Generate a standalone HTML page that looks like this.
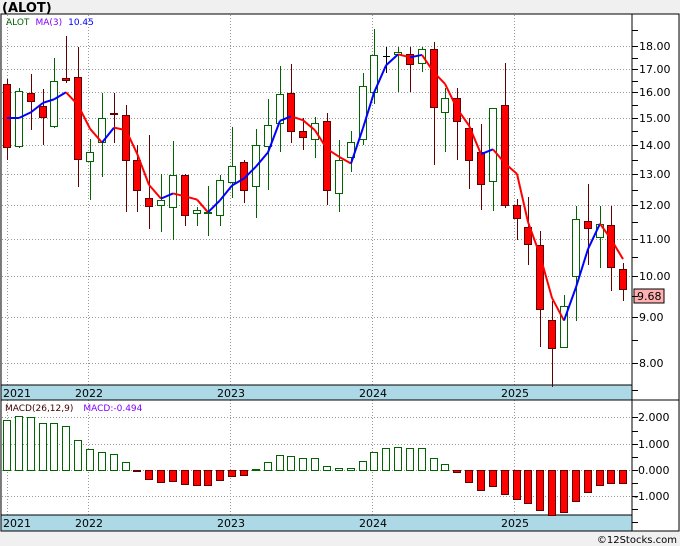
<!DOCTYPE html>
<html><head><meta charset="utf-8"><style>
body{margin:0;width:680px;height:546px;background:#f0f0f0;overflow:hidden;font-family:"Liberation Sans","DejaVu Sans",sans-serif}
svg{position:absolute;left:0;top:0}
</style></head><body>
<svg id="s" width="680" height="546" xmlns="http://www.w3.org/2000/svg" font-family="DejaVu Sans, Liberation Sans, sans-serif">
<rect x="0" y="0" width="680" height="546" fill="#f0f0f0"/>
<text x="2" y="12" font-size="13" font-weight="bold" fill="#000">(ALOT)</text>
<rect x="1" y="14" width="678" height="517" fill="#fff" stroke="#000" stroke-width="1"/>
<g id="grid" stroke="#999" stroke-dasharray="1,2" stroke-width="1"></g>
<rect x="1" y="385" width="631" height="15" fill="#add8e6" stroke="#000"/>
<rect x="1" y="515" width="631" height="16" fill="#add8e6" stroke="#000"/>
<line x1="632" y1="14" x2="632" y2="531" stroke="#000"/>
<line x1="632" y1="400" x2="679" y2="400" stroke="#000"/>
<g font-size="11" fill="#000">
<text x="3" y="397">2021</text><text x="75" y="397">2022</text><text x="217" y="397">2023</text><text x="359" y="397">2024</text><text x="501" y="397">2025</text>
<text x="3" y="527">2021</text><text x="75" y="527">2022</text><text x="217" y="527">2023</text><text x="359" y="527">2024</text><text x="501" y="527">2025</text>
</g>
<g font-size="11" fill="#000" id="axl">
<text x="639" y="50">18.00</text><text x="639" y="73">17.00</text><text x="639" y="96">16.00</text><text x="639" y="122">15.00</text><text x="639" y="149">14.00</text><text x="639" y="178">13.00</text><text x="639" y="209">12.00</text><text x="639" y="243">11.00</text><text x="639" y="280">10.00</text><text x="639" y="321">9.00</text><text x="639" y="367">8.00</text>
<text x="638" y="421">2.000</text><text x="638" y="448">1.000</text><text x="638" y="474">0.000</text><text x="634" y="500">-1.000</text>
</g>
<rect x="634" y="289" width="30" height="14" fill="#ffb0b0" stroke="#000"/>
<text x="637" y="300" font-size="11" fill="#000">9.68</text>
<g id="ticks" stroke="#000"></g>
<g id="c"></g>
<g id="m"></g>
<g id="h"></g>
<text x="6" y="25" font-size="9"><tspan fill="#006400">ALOT</tspan><tspan fill="#8000ff" dx="6">MA(3)</tspan><tspan fill="#0000ff" dx="6">10.45</tspan></text>
<text x="5" y="411" font-size="9"><tspan fill="#400000">MACD(26,12,9)</tspan><tspan fill="#8000ff" dx="10">MACD:-0.494</tspan></text>
<text x="677" y="543" font-size="10" fill="#000" text-anchor="end">©12Stocks.com</text>
</svg>
<script>
var NS="http://www.w3.org/2000/svg";
function el(p,t,a){var e=document.createElementNS(NS,t);for(var k in a)e.setAttribute(k,a[k]);document.getElementById(p).appendChild(e);return e;}
[46,69,92,118,145,174,205,239,276,317,363,417,444,470,496].forEach(function(y){el("grid","line",{x1:2,y1:y+.5,x2:632,y2:y+.5});});
[7,88,230,372,514].forEach(function(x){el("grid","line",{x1:x+.5,y1:15,x2:x+.5,y2:385});el("grid","line",{x1:x+.5,y1:400,x2:x+.5,y2:515});});
[30,46,58,69,81,92,105,118,131,145,160,174,190,205,222,239,257,276,296,317,340,363,390,417,431,444,457,470,483,496,509,522].forEach(function(y){el("ticks","line",{x1:632,y1:y+.5,x2:638,y2:y+.5});});
var D=[[84,147,79,160,'R'],[91,146,88,148,'G'],[93,101,74,130,'R'],[106,117,89,145,'R'],[81,126,58,128,'G'],[78,80,36,83,'R'],[77,159,47,187,'R'],[152,161,139,200,'G'],[118,142,93,177,'G'],[113,114,93,143,'R'],
[115,160,105,212,'R'],[160,190,145,212,'R'],[198,206,135,229,'R'],[200,205,174,232,'G'],[175,207,141,240,'G'],[175,215,174,226,'R'],[210,213,207,226,'G'],[212,213,186,236,'G'],[180,215,175,226,'G'],[166,182,127,198,'G'],
[162,190,160,203,'R'],[145,186,129,218,'G'],[125,146,99,190,'G'],[94,123,66,152,'G'],[93,131,64,143,'R'],[131,137,118,150,'R'],[123,139,117,158,'G'],[121,190,113,205,'R'],[160,193,140,212,'G'],[142,157,131,172,'G'],
[86,139,73,145,'G'],[55,92,29,104,'G'],[56,57,47,73,'K'],[52,54,47,92,'G'],[54,64,47,92,'R'],[49,63,47,72,'G'],[49,107,42,165,'R'],[98,112,88,152,'G'],[98,121,88,160,'R'],[128,160,118,189,'R'],
[152,184,124,210,'R'],[108,181,108,211,'G'],[105,205,63,208,'R'],[205,218,199,240,'R'],[227,244,197,265,'R'],[245,309,231,347,'R'],[320,348,301,387,'R'],[306,347,295,347,'G'],[219,276,206,321,'G'],[221,228,184,265,'R'],
[224,237,206,268,'G'],[225,267,206,291,'R'],[269,289,263,301,'R']];
var X=function(i){return Math.round(7+i*11.85);};
var cl=[];
D.forEach(function(d,i){var x=X(i);var wc=d[4]=='G'?'#006400':(d[4]=='K'?'#000':'#600000');
el("c","line",{x1:x+.5,y1:d[2],x2:x+.5,y2:d[3],stroke:wc});
if(d[4]=='K'){el("c","line",{x1:x-3,y1:d[0]+.5,x2:x+4,y2:d[0]+.5,stroke:'#000'});}
else el("c","rect",{x:x-3.5,y:d[0]+.5,width:7,height:Math.max(1,d[1]-d[0]),fill:d[4]=='G'?'#fff':'#ff0000',stroke:d[4]=='G'?'#006400':'#600000'});
var c=d[4]=='R'?d[1]:d[0];cl.push(Math.exp((1176-c)/391));});
var pts=[];for(var i=0;i<cl.length;i++){var s=0,n=0;for(var j=Math.max(0,i-2);j<=i;j++){s+=cl[j];n++;}var p=s/n;pts.push([X(i),1176-391*Math.log(p)]);}
pts[0][1]=118;
for(var i=1;i<pts.length;i++){var up=pts[i][1]<pts[i-1][1];el("m","line",{x1:pts[i-1][0],y1:pts[i-1][1],x2:pts[i][0],y2:pts[i][1],stroke:up?'#0000ff':'#ff0000','stroke-width':2});}
var M=[420,416,417,423,423,426,440,449,452,454,462,471,479,482,481,484,485,485,480,476,475,469,462,455,456,458,458,466,468,468,461,452,448,447,448,448,458,464,472,482,490,486,494,499,503,510,515,512,501,492,485,483,483];
M.forEach(function(t,i){var x=X(i);if(t<470)el("h","rect",{x:x-3.5,y:t+.5,width:7,height:470-t,fill:'#fff',stroke:'#006400'});else el("h","rect",{x:x-3.5,y:470.5,width:7,height:Math.max(1,t-470),fill:'#ff0000',stroke:'#600000'});});
</script>
</body></html>
